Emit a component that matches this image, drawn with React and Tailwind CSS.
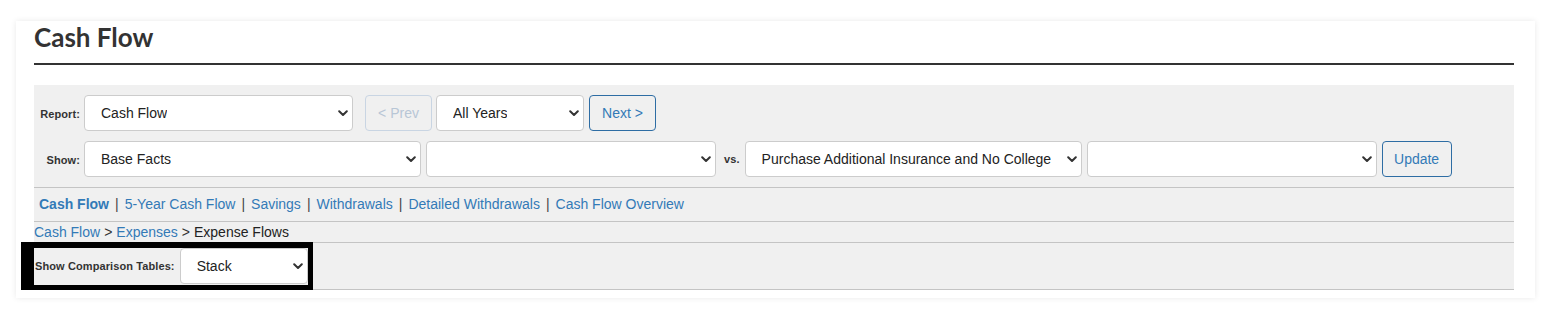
import React from "react";

const Chevron = () => (
  <svg width="10" height="7" viewBox="0 0 10 7" className="shrink-0">
    <path d="M1.2 1.2 L5 5 L8.8 1.2" fill="none" stroke="#333" strokeWidth="2" strokeLinecap="round" strokeLinejoin="round" />
  </svg>
);

const Select = ({ w, text }) => (
  <div
    className={`${w} h-[36px] shrink-0 bg-white border border-[#cccccc] rounded-[4px] flex items-center justify-between pl-[16px] pr-[4px] text-[14px] text-[#222]`}
  >
    <span className="whitespace-nowrap overflow-hidden">{text}</span>
    <Chevron />
  </div>
);

const Label = ({ children, className = "" }) => (
  <span className={`text-[11px] font-bold text-[#333] tracking-[0.1px] ${className}`}>{children}</span>
);

const Sep = () => <span className="mx-[6px] text-[#444]">|</span>;

export default function App() {
  return (
    <div
      className="bg-white w-[1555px] h-[323px] pt-[21px] pl-[16px]"
      style={{ fontFamily: '"Liberation Sans", Arial, sans-serif' }}
    >
      <div className="w-[1519px] h-[277px] bg-white shadow-[0_0_6px_rgba(0,0,0,0.09)] pl-[18px] pr-[21px]">
        <div
          className="pt-[1px] pb-[11px] leading-[30px] text-[26px] font-bold text-[#333] border-b-2 border-[#333]"
          style={{ fontFamily: 'Lato, "Open Sans", sans-serif' }}
        >
          Cash Flow
        </div>

        <div className="mt-[20px] bg-[#f0f0f0]">
          <div className="pt-[10px] pb-[10px] border-b border-[#c4c4c4] flex flex-col gap-[10px]">
            <div className="flex items-center">
              <div className="w-[46px] text-right">
                <Label>Report:</Label>
              </div>
              <div className="ml-[4px]">
                <Select w="w-[269px]" text="Cash Flow" />
              </div>
              <div className="ml-[12px] w-[67px] h-[36px] border border-[#c9d5e3] rounded-[4px] flex items-center justify-center text-[14px] text-[#b8c6d6]">
                &lt; Prev
              </div>
              <div className="ml-[4px]">
                <Select w="w-[148px]" text="All Years" />
              </div>
              <div className="ml-[5px] w-[67px] h-[36px] border border-[#2e6da4] rounded-[4px] flex items-center justify-center text-[14px] text-[#337ab7]">
                Next &gt;
              </div>
            </div>
            <div className="flex items-center">
              <div className="w-[46px] text-right">
                <Label>Show:</Label>
              </div>
              <div className="ml-[4px]">
                <Select w="w-[337px]" text="Base Facts" />
              </div>
              <div className="ml-[5px]">
                <Select w="w-[290px]" text="" />
              </div>
              <Label className="ml-[8px] mr-[5px]">vs.</Label>
              <Select w="w-[337px]" text="Purchase Additional Insurance and No College" />
              <div className="ml-[5px]">
                <Select w="w-[290px]" text="" />
              </div>
              <div className="ml-[5px] w-[70px] h-[36px] border border-[#2e6da4] rounded-[4px] flex items-center justify-center text-[14px] text-[#337ab7]">
                Update
              </div>
            </div>
          </div>

          <div className="h-[34px] border-b border-[#c4c4c4] flex items-center pl-[5px] text-[14px] text-[#337ab7]">
            <span className="font-bold">Cash Flow</span>
            <Sep />
            <span>5-Year Cash Flow</span>
            <Sep />
            <span>Savings</span>
            <Sep />
            <span>Withdrawals</span>
            <Sep />
            <span>Detailed Withdrawals</span>
            <Sep />
            <span>Cash Flow Overview</span>
          </div>

          <div className="h-[21px] border-b border-[#c4c4c4] flex items-center text-[14px]">
            <span className="text-[#337ab7]">Cash Flow</span>
            <span className="text-[#333] mx-[4px]">&gt;</span>
            <span className="text-[#337ab7]">Expenses</span>
            <span className="text-[#333] mx-[4px]">&gt;</span>
            <span className="text-[#222]">Expense Flows</span>
          </div>

          <div className="relative h-[47px] border-b border-[#c4c4c4] flex items-center pl-[1px]">
            <Label>Show Comparison Tables:</Label>
            <div className="ml-[5px]">
              <Select w="w-[128px]" text="Stack" />
            </div>
            <div className="absolute left-[-13px] top-[-1px] w-[292px] h-[48px] border-black border-t-[6px] border-b-[5px] border-r-[5px] border-l-[13px]" />
          </div>
        </div>
      </div>
    </div>
  );
}
